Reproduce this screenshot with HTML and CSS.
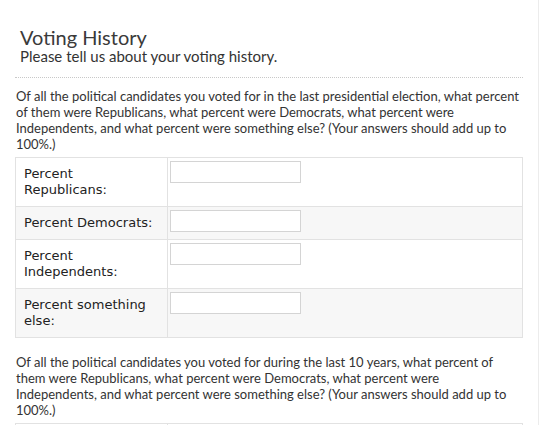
FILE: index.html
```html
<!DOCTYPE html>
<html lang="en">
<head>
    <meta charset="UTF-8">
    <title>Voting History</title>
    <link rel="stylesheet" href="styles.css">
</head>
<body>
    <div class="page">
        <div class="header">
            <h1>Voting History</h1>
            <p class="subtitle">Please tell us about your voting history.</p>
        </div>

        <p class="question">Of all the political candidates you voted for in the last presidential election, what percent of them were Republicans, what percent were Democrats, what percent were Independents, and what percent were something else? (Your answers should add up to 100%.)</p>
        <table class="grid">
            <tr>
                <td class="label">Percent Republicans:</td>
                <td class="field"><input type="text"></td>
            </tr>
            <tr class="alt">
                <td class="label">Percent Democrats:</td>
                <td class="field"><input type="text"></td>
            </tr>
            <tr>
                <td class="label">Percent Independents:</td>
                <td class="field"><input type="text"></td>
            </tr>
            <tr class="alt">
                <td class="label">Percent something else:</td>
                <td class="field"><input type="text"></td>
            </tr>
        </table>

        <p class="question">Of all the political candidates you voted for during the last 10 years, what percent of them were Republicans, what percent were Democrats, what percent were Independents, and what percent were something else? (Your answers should add up to 100%.)</p>
        <table class="grid">
            <tr>
                <td class="label">Percent Republicans:</td>
                <td class="field"><input type="text"></td>
            </tr>
            <tr class="alt">
                <td class="label">Percent Democrats:</td>
                <td class="field"><input type="text"></td>
            </tr>
        </table>
    </div>
</body>
</html>
```

FILE: styles.css
```css
body { margin: 0; font-family: Lato, "Open Sans", sans-serif; color: #333; background: #fff; }
.page { width: 508px; padding: 0 15px 20px 15px; border-right: 1px solid #ececec; min-height: 425px; }
.header { padding: 26px 0 12px 5px; border-bottom: 1px dotted #c8c8c8; }
h1 { margin: 0; font-size: 20px; line-height: 22px; font-weight: normal; color: #3a3a3a; }
.subtitle { margin: 0; font-size: 15px; line-height: 17px; color: #333; }
.question { margin: 10px 0 5px 1px; font-size: 13px; line-height: 16px; }
.grid + .question { margin-top: 16px; }
.grid { width: 100%; border-collapse: collapse; border: 1px solid #e2e2e2; }
.grid td { border: 1px solid #e2e2e2; vertical-align: top; }
.grid .alt { background: #f7f7f7; }
.label { width: 135px; padding: 8px 8px; font-family: "DejaVu Sans", Verdana, sans-serif; font-size: 13px; line-height: 16px; color: #222; }
.field { padding: 2px 2px; }
input { width: 131px; height: 22px; box-sizing: border-box; border: 1px solid #d4d4d4; background: #fff; margin: 0; padding: 2px 4px; }
```
